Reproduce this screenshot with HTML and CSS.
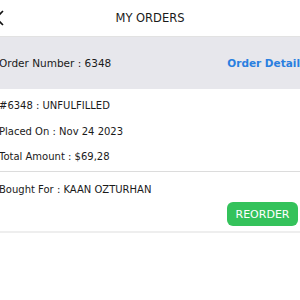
FILE: index.html
```html
<!DOCTYPE html>
<html>
<head>
<meta charset="utf-8">
<link rel="stylesheet" href="styles.css">
</head>
<body>
<div class="screen">
  <header class="topbar">
    <svg class="back" width="12" height="16" viewBox="0 0 12 16"><path d="M10 1 L3 8 L10 15" fill="none" stroke="#111" stroke-width="1.6"/></svg>
    <h1 class="title">MY ORDERS</h1>
  </header>
  <div class="order-head">
    <span class="num">Order Number : 6348</span>
    <span class="detail">Order Detail</span>
  </div>
  <div class="order-body">
    <p class="line">#6348 : UNFULFILLED</p>
    <p class="line">Placed On : Nov 24 2023</p>
    <p class="line">Total Amount : $69,28</p>
  </div>
  <div class="order-foot">
    <p class="line">Bought For : KAAN OZTURHAN</p>
    <div class="actions"><button class="reorder">REORDER</button></div>
  </div>
</div>
</body>
</html>
```
FILE: styles.css
```css
html, body { margin: 0; padding: 0; background: #fff; }
body { font-family: "DejaVu Sans", sans-serif; color: #1a1a1a; overflow: hidden; }
.screen { margin-left: -9px; width: 309px; }
.topbar { height: 36px; display: flex; align-items: center; justify-content: center; position: relative; border-bottom: 1px solid #e2e2e2; }
.back { position: absolute; left: 2px; top: 10px; }
.title { margin: 0; font-size: 11.5px; font-weight: 500; margin-left: 9px; }
.order-head { height: 52px; background: #e7e7ec; display: flex; align-items: center; justify-content: space-between; padding: 0 0 0 8px; font-size: 10.5px; }
.detail { color: #2a7fe0; font-weight: 600; margin-right: 0; font-size: 10.5px; }
.order-body { padding: 4px 8px 1px; border-bottom: 1px solid #dcdcdc; }
.line { margin: 0; font-size: 10px; line-height: 25.5px; }
.order-foot { padding: 5px 0 5px 8px; border-bottom: 2px solid #eeeeee; }
.actions { display: flex; justify-content: flex-end; margin-top: 0; }
.reorder { background: #34c25b; color: #fff; border: none; border-radius: 6px; font-family: inherit; font-size: 11px; font-weight: 500; height: 24px; width: 71px; padding: 0; margin-right: 2px; }
```
